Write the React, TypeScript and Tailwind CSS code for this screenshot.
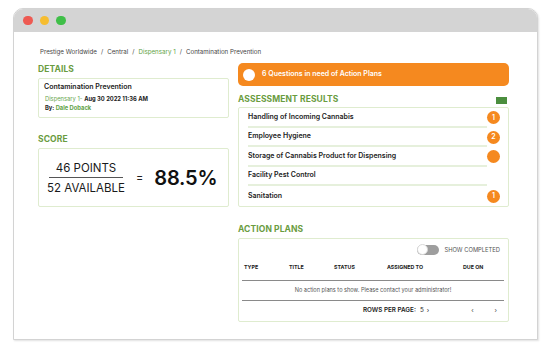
import React from "react";

const font = { fontFamily: "Inter, 'Noto Sans', sans-serif" };

const results = [
  { name: "Handling of Incoming Cannabis", count: "1" },
  { name: "Employee Hygiene", count: "2" },
  { name: "Storage of Cannabis Product for Dispensing", count: "" },
  { name: "Facility Pest Control", count: null },
  { name: "Sanitation", count: "1" },
];

const Heading = ({ children }: { children: React.ReactNode }) => (
  <h2 className="h-[12px] text-[8.5px] leading-[12px] font-bold text-[#6a9c3f] tracking-[0.1px]">
    {children}
  </h2>
);

export default function App() {
  return (
    <div className="w-[550px] h-[356px] bg-white pt-[8px] pl-[13px]" style={font}>
      <div className="w-[525px] h-[332px] rounded-t-[10px] border border-[#d3d3d3] shadow-[1px_1px_2px_rgba(0,0,0,0.12)] overflow-hidden bg-white">
        {/* title bar */}
        <div className="h-[23px] bg-[#d4d4d4] flex items-center gap-[7px] pl-[9px]">
          <span className="w-[9.5px] h-[9.5px] rounded-full bg-[#ee5a52]" />
          <span className="w-[9.5px] h-[9.5px] rounded-full bg-[#f6bd30]" />
          <span className="w-[9.5px] h-[9.5px] rounded-full bg-[#3fbf48]" />
        </div>

        <div className="pt-[15px] pl-[24px] pr-[27px]">
          {/* breadcrumb */}
          <div className="ml-[2px] h-[10px] flex items-center gap-[4px] text-[6.2px] text-[#444]">
            <span>Prestige Worldwide</span>
            <span>/</span>
            <span>Central</span>
            <span>/</span>
            <span className="text-[#5fa347]">Dispensary 1</span>
            <span>/</span>
            <span>Contamination Prevention</span>
          </div>

          <div className="mt-[6px] flex gap-[9px]">
            {/* left column */}
            <div className="w-[191px] flex flex-col">
              <Heading>DETAILS</Heading>
              <div className="mt-[3px] h-[40px] border border-[#dfeccf] rounded-[2px] pl-[5px] pt-[3px]">
                <div className="text-[7px] leading-[10px] font-semibold text-[#1c1c1c]">
                  Contamination Prevention
                </div>
                <div className="mt-[2px] pl-[1px] text-[5.8px] leading-[9px]">
                  <span className="text-[#6aa84f]">Dispensary 1- </span>
                  <span className="font-bold text-[#1c1c1c]">Aug 30 2022 11:36 AM</span>
                </div>
                <div className="pl-[1px] text-[5.8px] leading-[9px] font-bold">
                  <span className="text-[#1c1c1c]">By: </span>
                  <span className="text-[#5fa347]">Dale Doback</span>
                </div>
              </div>

              <div className="mt-[15px]">
                <Heading>SCORE</Heading>
              </div>
              <div className="mt-[3px] h-[59px] border border-[#dfeccf] rounded-[2px] flex items-center pl-[8px]">
                <div className="w-[78px] flex flex-col items-center text-[11.5px] text-[#1a1a1a]">
                  <div className="leading-[14px] pb-[2px]">46 POINTS</div>
                  <div className="w-[74px] border-t border-[#555]" />
                  <div className="leading-[14px] pt-[3px]">52 AVAILABLE</div>
                </div>
                <div className="ml-[11px] text-[11px] text-[#222]">=</div>
                <div className="ml-[11px] text-[20px] font-semibold text-[#111] tracking-[-0.2px]">
                  88.5%
                </div>
              </div>
            </div>

            {/* right column */}
            <div className="w-[271px] flex flex-col">
              <div className="h-[23px] rounded-[5px] bg-[#f5891f] flex items-center pl-[5px] gap-[7px]">
                <span className="w-[12px] h-[12px] rounded-full bg-white" />
                <span className="text-[7px] font-semibold text-white">
                  6 Questions in need of Action Plans
                </span>
              </div>

              <div className="mt-[7px] flex items-center justify-between pr-[2px]">
                <Heading>ASSESSMENT RESULTS</Heading>
                <span className="w-[11px] h-[7px] bg-[#4b8e3e] mt-[2px]" />
              </div>

              <div className="mt-[2px] border border-[#dfeccf] rounded-[2px] flex flex-col">
                {results.map((r, i) => (
                  <div key={r.name} className="h-[19.6px] flex items-center pl-[9px] pr-[8px]">
                    <div
                      className={`flex-1 h-full flex items-center text-[7px] font-semibold text-[#1c1c1c] ${
                        i < results.length - 1 ? "border-b-2 border-[#e6f0dc]" : ""
                      }`}
                    >
                      {r.name}
                    </div>
                    <div className="w-[13px] h-full flex items-center">
                      {r.count !== null && (
                        <span className="w-[13px] h-[13px] rounded-full bg-[#f5891f] flex items-center justify-center text-[7px] font-semibold text-white">
                          {r.count}
                        </span>
                      )}
                    </div>
                  </div>
                ))}
              </div>

              <div className="mt-[16px]">
                <Heading>ACTION PLANS</Heading>
              </div>
              <div className="mt-[3px] h-[84px] border border-[#dfeccf] rounded-[2px] px-[3px] pr-[4px] flex flex-col">
                <div className="pt-[6px] flex items-center justify-end pr-[4px]">
                  <div className="relative w-[22px] h-[10px] rounded-full bg-[#9e9e9e]">
                    <span className="absolute left-0 top-[-0.5px] w-[11px] h-[11px] rounded-full bg-white border border-[#d8d8d8]" />
                  </div>
                  <span className="ml-[5px] text-[5.8px] text-[#555]">SHOW COMPLETED</span>
                </div>
                <div className="h-[26px] grid grid-cols-[45px_45px_53px_76px_1fr] items-center pl-[2px] text-[5.3px] font-bold text-[#1c1c1c] border-b border-[#8a8a8a]">
                  <span>TYPE</span>
                  <span>TITLE</span>
                  <span>STATUS</span>
                  <span>ASSIGNED TO</span>
                  <span>DUE ON</span>
                </div>
                <div className="h-[20px] flex items-center justify-center text-[5.6px] text-[#555] border-b border-[#8a8a8a]">
                  No action plans to show. Please contact your administrator!
                </div>
                <div className="h-[20px] flex items-center justify-end pr-[7px] text-[6.3px] text-[#1c1c1c]">
                  <span className="font-semibold">ROWS PER PAGE:</span>
                  <span className="ml-[4px]">5</span>
                  <span className="ml-[3px]">›</span>
                  <span className="ml-[42px] text-[#444]">‹</span>
                  <span className="ml-[21px] text-[#444]">›</span>
                </div>
              </div>
            </div>
          </div>
        </div>
      </div>
    </div>
  );
}
